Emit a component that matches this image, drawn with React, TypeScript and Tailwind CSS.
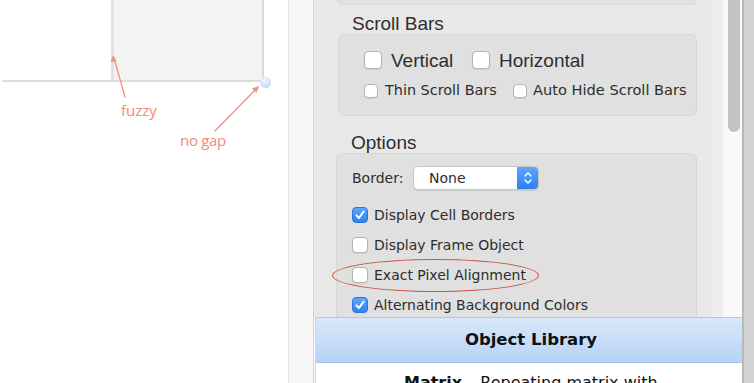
import React from "react";

const lucida = { fontFamily: '"DejaVu Sans", "Liberation Sans", sans-serif' };
const helv = { fontFamily: '"Liberation Sans", Arial, sans-serif' };

interface CheckProps {
  size: number;
  checked?: boolean;
}

const Check: React.FC<CheckProps> = ({ size, checked }) => {
  if (checked) {
    return (
      <div
        className="shrink-0 rounded-[4px] bg-gradient-to-b from-[#5aa8fc] to-[#2f82f1] border border-[#2a76dc] flex items-center justify-center"
        style={{ width: size, height: size }}
      >
        <svg width={size - 4} height={size - 4} viewBox="0 0 12 12">
          <path d="M2.4 6.4 L4.9 9 L9.6 2.6" fill="none" stroke="white" strokeWidth="2" strokeLinecap="round" strokeLinejoin="round" />
        </svg>
      </div>
    );
  }
  return (
    <div
      className="shrink-0 rounded-[4px] bg-white border border-[#b3b3b3] shadow-[0_1px_1px_rgba(0,0,0,0.08)]"
      style={{ width: size, height: size }}
    />
  );
};

const OptionRow: React.FC<{ label: string; checked?: boolean }> = ({ label, checked }) => (
  <div className="h-[30px] flex items-center gap-[6px]">
    <Check size={16} checked={checked} />
    <span className="text-[14px] text-[#2d2d2d] leading-none" style={lucida}>{label}</span>
  </div>
);

export default function App() {
  return (
    <div className="relative w-[754px] h-[383px] flex overflow-hidden bg-white">
      {/* canvas side */}
      <div className="relative w-[288px] h-full shrink-0">
        <div className="ml-[111px] w-[153px] h-[80px] bg-[#f3f3f3] border-l-[3px] border-l-[#e2e2e2] border-r-2 border-r-[#dcdcdc]" />
        <div className="ml-[2px] w-[262px] h-[2px] bg-[#dcdcdc]" />

        <div className="absolute left-[260px] top-[77px] w-[11px] h-[11px] rounded-full bg-[radial-gradient(circle_at_40%_35%,#f2f7ff,#c6dcf8_70%,#b1cdf3)]" />

        <svg className="absolute left-0 top-0" width="288" height="160" viewBox="0 0 288 160">
          <g stroke="#ee9283" strokeWidth="1.3" fill="none" strokeLinecap="round">
            <line x1="125" y1="97" x2="114" y2="58" />
            <line x1="215" y1="131" x2="256" y2="89" />
          </g>
          <polygon points="113,55 110.5,62 116.5,61" fill="#ee9283" />
          <polygon points="259,86 252,88.5 256.5,93" fill="#ee9283" />
        </svg>

        <span
          className="absolute left-[121px] top-[101px] text-[15px] leading-[18px] text-[#f08a7b]"
          style={{ fontFamily: '"Open Sans", Lato, sans-serif' }}
        >
          fuzzy
        </span>
        <span
          className="absolute left-[180px] top-[131px] text-[15px] leading-[18px] text-[#f08a7b] tracking-[-0.3px]"
          style={{ fontFamily: '"Open Sans", Lato, sans-serif' }}
        >
          no gap
        </span>
      </div>

      {/* left strip of inspector window */}
      <div className="w-[26px] h-full shrink-0 bg-[#f6f6f6] border-l border-l-[#e3e3e3] border-r border-r-[#d4d4d4]" />

      {/* main column */}
      <div className="w-[428px] h-full shrink-0 flex flex-col">
        <div className="h-[317px] shrink-0 flex overflow-hidden">
          <div className="w-[398px] h-full bg-[#e8e8e8] flex flex-col">
            <div className="ml-[23px] w-[360px] h-[5px] shrink-0 bg-[#e1e1e1] border-x border-b border-[#d9d9d9] rounded-b-[6px]" />

            <div className="ml-[38px] mt-[8px] text-[19px] leading-[21px] text-[#2f2f2f]" style={helv}>Scroll Bars</div>

            <div className="ml-[24px] w-[359px] h-[82px] shrink-0 bg-[#e0e0e0] border border-[#d8d8d8] rounded-[6px] pl-[25px] pt-[16px]">
              <div className="flex items-center h-[18px]">
                <div className="w-[108px] flex items-center gap-[9px]">
                  <Check size={18} />
                  <span className="text-[19px] leading-none text-[#2d2d2d]" style={helv}>Vertical</span>
                </div>
                <div className="flex items-center gap-[9px]">
                  <Check size={18} />
                  <span className="text-[19px] leading-none text-[#2d2d2d]" style={helv}>Horizontal</span>
                </div>
              </div>
              <div className="flex items-center h-[15px] mt-[14px]">
                <div className="w-[149px] flex items-center gap-[7px]">
                  <Check size={14} />
                  <span className="text-[14.4px] leading-none text-[#2d2d2d]" style={lucida}>Thin Scroll Bars</span>
                </div>
                <div className="flex items-center gap-[6px]">
                  <Check size={14} />
                  <span className="text-[14.6px] leading-none text-[#2d2d2d]" style={lucida}>Auto Hide Scroll Bars</span>
                </div>
              </div>
            </div>

            <div className="ml-[37px] mt-[16px] text-[19px] leading-[21px] text-[#2f2f2f]" style={helv}>Options</div>

            <div className="ml-[22px] w-[361px] flex-1 bg-[#e0e0e0] border border-[#d8d8d8] rounded-t-[6px] pl-[15px] pt-[12px]">
              <div className="flex items-center h-[24px]">
                <span className="w-[61px] text-[14px] leading-none text-[#2d2d2d]" style={lucida}>Border:</span>
                <div className="w-[126px] h-[24px] flex rounded-[5px] bg-white border border-[#c6c6c6] shadow-[0_1px_1px_rgba(0,0,0,0.1)] overflow-hidden">
                  <span className="flex-1 pl-[15px] flex items-center text-[14px] text-[#2d2d2d]" style={lucida}>None</span>
                  <div className="w-[21px] h-full bg-gradient-to-b from-[#5aa8fc] to-[#2d7ff0] flex items-center justify-center">
                    <svg width="10" height="16" viewBox="0 0 10 16">
                      <path d="M2 6 L5 3 L8 6 M2 10 L5 13 L8 10" fill="none" stroke="white" strokeWidth="1.4" strokeLinecap="round" strokeLinejoin="round" />
                    </svg>
                  </div>
                </div>
              </div>
              <div className="mt-[10px] flex flex-col">
                <OptionRow label="Display Cell Borders" checked />
                <OptionRow label="Display Frame Object" />
                <OptionRow label="Exact Pixel Alignment" />
                <OptionRow label="Alternating Background Colors" checked />
              </div>
            </div>
          </div>

          {/* scroller */}
          <div className="w-[11px] h-full bg-[#eeeeee]" />
          <div className="w-[19px] h-full bg-[#f9f9f9] pl-[5px] pr-[1px]">
            <div className="w-[12px] h-[132px] bg-[#c3c3c3] rounded-b-[6px]" />
          </div>
        </div>

        {/* object library */}
        <div className="flex-1 flex flex-col ml-[1px] border-l border-l-[#cfcfcf]">
          <div className="h-[46px] shrink-0 border-t border-t-[#c4c4c4] border-b border-b-[#a8c3e4] bg-gradient-to-b from-[#d9e8fb] to-[#b6d3f7] flex items-center justify-center">
            <span className="text-[16.5px] font-bold text-[#111] leading-none pl-[4px]" style={lucida}>Object Library</span>
          </div>
          <div className="flex-1 bg-white pl-[88px] pt-[8px] text-[16px] text-[#111] whitespace-nowrap" style={lucida}>
            <span className="font-bold">Matrix</span> – Repeating matrix with
          </div>
        </div>
      </div>

      {/* right edge */}
      <div className="w-[12px] h-full shrink-0 bg-[#d3d3d3] border-l-2 border-l-[#b9b9b9]" />

      {/* red annotation ellipse */}
      <div className="absolute left-[332px] top-[259px] w-[207px] h-[33px] rounded-[50%] border-[1.5px] border-[#c9523f]" />
    </div>
  );
}
